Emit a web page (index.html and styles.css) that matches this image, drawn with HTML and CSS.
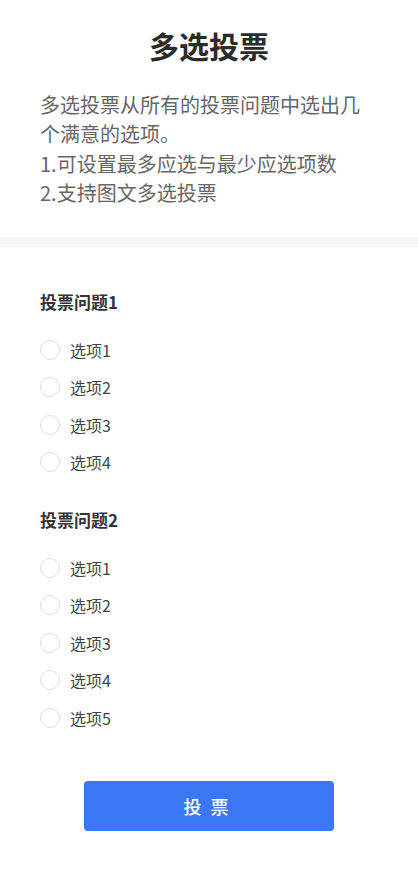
FILE: index.html
```html
<!DOCTYPE html>
<html lang="zh">
<head>
<meta charset="utf-8">
<link rel="stylesheet" href="styles.css">
</head>
<body>
<header class="intro">
  <h1 class="title">多选投票</h1>
  <p class="desc">多选投票从所有的投票问题中选出几个满意的选项。<br>1.可设置最多应选与最少应选项数<br>2.支持图文多选投票</p>
</header>
<div class="band"></div>
<main class="vote">
  <section class="question">
    <h2 class="q-title">投票问题1</h2>
    <ul class="options">
      <li class="option"><span class="radio"></span><span class="label">选项1</span></li>
      <li class="option"><span class="radio"></span><span class="label">选项2</span></li>
      <li class="option"><span class="radio"></span><span class="label">选项3</span></li>
      <li class="option"><span class="radio"></span><span class="label">选项4</span></li>
    </ul>
  </section>
  <section class="question">
    <h2 class="q-title">投票问题2</h2>
    <ul class="options">
      <li class="option"><span class="radio"></span><span class="label">选项1</span></li>
      <li class="option"><span class="radio"></span><span class="label">选项2</span></li>
      <li class="option"><span class="radio"></span><span class="label">选项3</span></li>
      <li class="option"><span class="radio"></span><span class="label">选项4</span></li>
      <li class="option"><span class="radio"></span><span class="label">选项5</span></li>
    </ul>
  </section>
  <div class="actions"><button class="submit" type="button">投票</button></div>
</main>
</body>
</html>
```
FILE: styles.css
```css
* { box-sizing: border-box; }
body {
  margin: 0;
  background: #fff;
  font-family: "Noto Sans CJK SC", "Noto Sans", sans-serif;
  color: #333;
}
.intro {
  padding: 25px 40px 30px;
}
.title {
  margin: 0;
  font-size: 30px;
  line-height: 40px;
  font-weight: 700;
  text-align: center;
  color: #2b2b2b;
}
.desc {
  margin: 25px 0 0;
  font-size: 20px;
  line-height: 29.3px;
  color: #666;
}
.band {
  height: 10px;
  background: #f5f6fa;
}
.vote {
  padding: 43px 40px 40px;
}
.question + .question {
  margin-top: 27px;
}
.q-title {
  margin: 0;
  font-size: 17px;
  line-height: 24px;
  font-weight: 700;
  color: #333;
}
.options {
  list-style: none;
  margin: 17px 0 0;
  padding: 0;
}
.option {
  display: flex;
  align-items: center;
  height: 37.5px;
}
.radio {
  width: 20px;
  height: 20px;
  border: 1px solid #dcdcdc;
  border-radius: 50%;
  margin-right: 10px;
  flex: none;
}
.label {
  font-size: 16px;
  color: #444;
}
.actions {
  display: flex;
  justify-content: center;
  margin-top: 44px;
}
.submit {
  width: 250px;
  height: 50px;
  border: 0;
  border-radius: 4px;
  background: #3a77f5;
  color: #fff;
  font-family: "Noto Sans CJK SC", sans-serif;
  font-size: 18px;
  font-weight: 500;
  letter-spacing: 9px;
  padding-left: 9px;
}
```
